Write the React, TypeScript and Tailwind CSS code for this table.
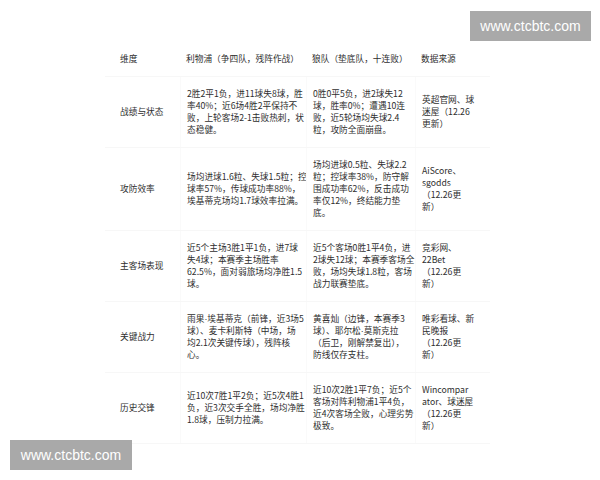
import React from "react";

type Row = {
  label: string;
  liv: string[];
  wol: string[];
  src: string[];
};

const rows: Row[] = [
  {
    label: "战绩与状态",
    liv: ["2胜2平1负，进11球失8球，胜", "率40%；近6场4胜2平保持不", "败，上轮客场2-1击败热刺，状", "态稳健。"],
    wol: ["0胜0平5负，进2球失12", "球，胜率0%；遭遇10连", "败，近5轮场均失球2.4", "粒，攻防全面崩盘。"],
    src: ["英超官网、球", "迷屋（12.26", "更新）"],
  },
  {
    label: "攻防效率",
    liv: ["场均进球1.6粒、失球1.5粒；控", "球率57%，传球成功率88%，", "埃基蒂克场均1.7球效率拉满。"],
    wol: ["场均进球0.5粒、失球2.2", "粒；控球率38%，防守解", "围成功率62%，反击成功", "率仅12%，终结能力垫", "底。"],
    src: ["AiScore、", "sgodds", "（12.26更", "新）"],
  },
  {
    label: "主客场表现",
    liv: ["近5个主场3胜1平1负，进7球", "失4球；本赛季主场胜率", "62.5%，面对弱旅场均净胜1.5", "球。"],
    wol: ["近5个客场0胜1平4负，进", "2球失12球；本赛季客场全", "败，场均失球1.8粒，客场", "战力联赛垫底。"],
    src: ["竞彩网、", "22Bet", "（12.26更", "新）"],
  },
  {
    label: "关键战力",
    liv: ["雨果·埃基蒂克（前锋，近3场5", "球）、麦卡利斯特（中场，场", "均2.1次关键传球），残阵核", "心。"],
    wol: ["黄喜灿（边锋，本赛季3", "球）、耶尔松·莫斯克拉", "（后卫，刚解禁复出），", "防线仅存支柱。"],
    src: ["唯彩看球、新", "民晚报", "（12.26更", "新）"],
  },
  {
    label: "历史交锋",
    liv: ["近10次7胜1平2负；近5次4胜1", "负，近3次交手全胜，场均净胜", "1.8球，压制力拉满。"],
    wol: ["近10次2胜1平7负；近5个", "客场对阵利物浦1平4负，", "近4次客场全败，心理劣势", "极致。"],
    src: ["Wincompar", "ator、球迷屋", "（12.26更", "新）"],
  },
];

// the CJK font draws "·" full width, the picture has a narrow one
const Line = ({ text }: { text: string }) => {
  const parts = text.split("·");
  return (
    <div className="whitespace-nowrap">
      {parts.map((p, i) => (
        <React.Fragment key={i}>
          {i > 0 && <span className="font-['Liberation_Sans']">·</span>}
          {p}
        </React.Fragment>
      ))}
    </div>
  );
};

const Lines = ({ lines }: { lines: string[] }) => (
  <div className="flex flex-col">
    {lines.map((l, i) => (
      <Line key={i} text={l} />
    ))}
  </div>
);

const Watermark = ({ className }: { className: string }) => (
  <div
    className={`absolute flex items-center justify-center bg-[#a9a9a9] text-[14px] text-white ${className}`}
    style={{ fontFamily: '"Liberation Sans", Arial, sans-serif' }}
  >
    www.ctcbtc.com
  </div>
);

export default function App() {
  return (
    <div
      className="relative h-[480px] w-[600px] overflow-hidden bg-white text-[8.7px] leading-[12px] text-[#2e2e2e]"
      style={{ fontFamily: '"Noto Sans CJK SC", sans-serif' }}
    >
      <Watermark className="left-[470px] top-[11px] h-[30px] w-[121px]" />

      <div className="ml-[105px] mt-[42px] w-[385px]">
        {/* header */}
        <div className="grid grid-cols-[75px_126px_109px_75px] border-b border-[#f7f7f7]">
          <div className="py-[11px] pl-[15px]">维度</div>
          <div className="py-[11px] pl-[6px] whitespace-nowrap">利物浦（争四队，残阵作战）</div>
          <div className="py-[11px] pl-[6px] whitespace-nowrap">狼队（垫底队，十连败）</div>
          <div className="py-[11px] pl-[6px]">数据来源</div>
        </div>

        {rows.map((r) => (
          <div
            key={r.label}
            className="grid grid-cols-[75px_126px_109px_75px] border-b border-[#f7f7f7]"
          >
            <div className="flex items-center py-[11px] pl-[15px] whitespace-nowrap">{r.label}</div>
            <div className="flex items-center border-l border-[#fafafa] py-[11px] pl-[6px]">
              <Lines lines={r.liv} />
            </div>
            <div className="flex items-center border-l border-[#fafafa] py-[11px] pl-[6px]">
              <Lines lines={r.wol} />
            </div>
            <div className="flex items-center border-l border-[#fafafa] py-[11px] pl-[6px]">
              <Lines lines={r.src} />
            </div>
          </div>
        ))}
      </div>

      <Watermark className="left-[10px] top-[440px] h-[30px] w-[122px]" />
    </div>
  );
}
